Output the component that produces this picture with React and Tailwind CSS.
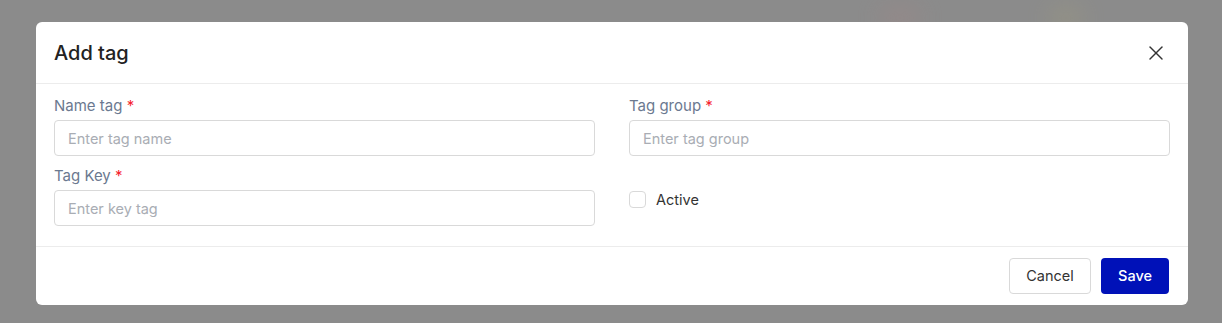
import { X } from 'lucide-react'

function Field({ label, placeholder }) {
  return (
    <div className="flex flex-col">
      <label className="mb-[4px] text-[15px] leading-5 text-[#6b7990]">
        {label} <span className="text-[#f5222d]">*</span>
      </label>
      <input
        placeholder={placeholder}
        className="h-9 w-full rounded-[4px] border border-[#d9d9d9] bg-white px-[13px] text-[14.5px] text-[#333] outline-none placeholder:text-[#a9adb4]"
      />
    </div>
  )
}

export default function App() {
  return (
    <div
      className="relative h-[323px] w-full overflow-hidden bg-[#8b8b8b] px-[36px] pt-[22px]"
      style={{ fontFamily: 'Inter, "Noto Sans", sans-serif' }}
    >
      {/* blurred page behind the overlay */}
      <div className="absolute left-[880px] top-[8px] h-5 w-10 rounded-full bg-[#a88585] opacity-40 blur-md" />
      <div className="absolute left-[1050px] top-[8px] h-5 w-8 rounded-full bg-[#a8a278] opacity-40 blur-md" />

      <div className="relative w-[1152px] rounded-[6px] bg-white">
        <div className="flex h-[62px] items-center justify-between border-b border-[#ececec] pl-[18px] pr-[20px]">
          <h2 className="text-[20px] font-medium leading-none text-[#222]">Add tag</h2>
          <X size={24} strokeWidth={1.4} className="text-[#333]" />
        </div>

        <div className="grid grid-cols-2 gap-x-[34px] gap-y-[10px] border-b border-[#ececec] px-[18px] pb-[20px] pt-[12px]">
          <Field label="Name tag" placeholder="Enter tag name" />
          <Field label="Tag group" placeholder="Enter tag group" />
          <Field label="Tag Key" placeholder="Enter key tag" />
          <div className="flex items-start gap-[10px] pt-[25px]">
            <span className="h-[17px] w-[17px] rounded-[4px] border border-[#d9d9d9] bg-white" />
            <span className="text-[14.5px] leading-[17px] text-[#333]">Active</span>
          </div>
        </div>

        <div className="flex h-[58px] items-center justify-end gap-[10px] pl-[18px] pr-[19px]">
          <button className="h-9 w-[82px] rounded-[4px] border border-[#d9d9d9] bg-white text-[14.5px] text-[#333]">
            Cancel
          </button>
          <button className="h-9 w-[68px] rounded-[4px] bg-[#0011b8] text-[14.5px] font-medium text-white">
            Save
          </button>
        </div>
      </div>
    </div>
  )
}
